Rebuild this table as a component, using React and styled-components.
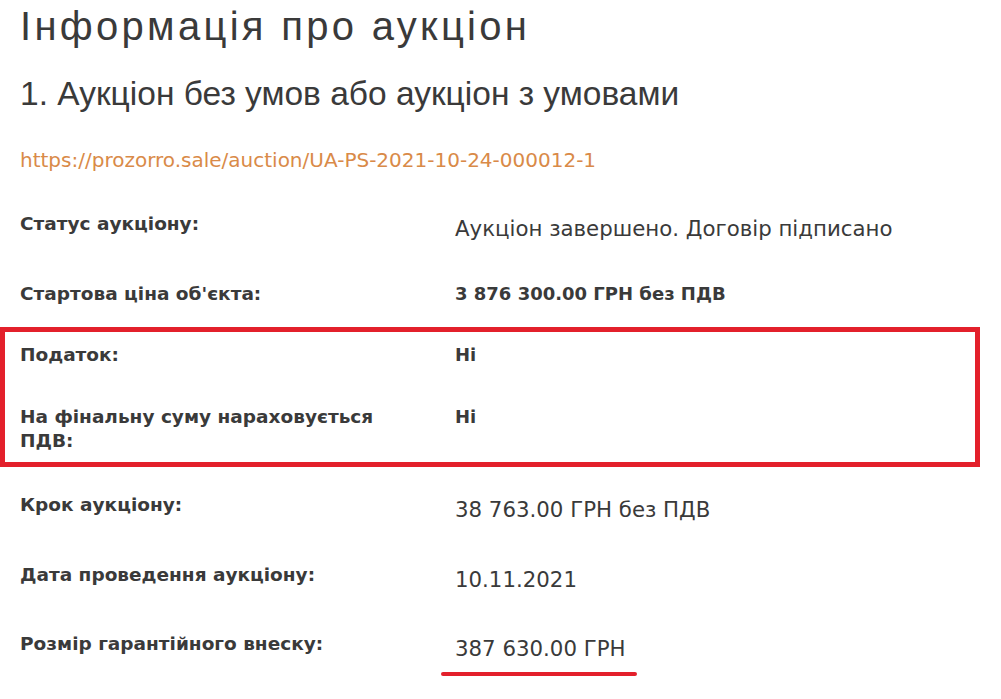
import React from 'react';
import styled, { createGlobalStyle } from 'styled-components';

const GlobalStyle = createGlobalStyle`
  body {
    margin: 0;
    background: #fff;
    font-family: "DejaVu Sans", "Open Sans", sans-serif;
    color: #3a3a3a;
  }
`;

const rows = [
  { label: 'Статус аукціону:', value: 'Аукціон завершено. Договір підписано', h: 70 },
  { label: 'Стартова ціна об\'єкта:', value: '3 876 300.00 ГРН без ПДВ', bold: true, h: 45 },
];

const boxed = [
  { label: 'Податок:', value: 'Ні', bold: true, h: 62 },
  { label: 'На фінальну суму нараховується ПДВ:', value: 'Ні', bold: true, h: 48 },
];

const tail = [
  { label: 'Крок аукціону:', value: '38 763.00 ГРН без ПДВ', h: 70 },
  { label: 'Дата проведення аукціону:', value: '10.11.2021', h: 69 },
  { label: 'Розмір гарантійного внеску:', value: '387 630.00 ГРН', marked: true, h: 60 },
];

function Info() {
  const renderRow = (r) => (
    <Row key={r.label} $h={r.h}>
      <Label>{r.label}</Label>
      <Value $bold={r.bold} $marked={r.marked}>{r.value}</Value>
    </Row>
  );

  return (
    <Page>
      <GlobalStyle />
      <Title>Інформація про аукціон</Title>
      <Subtitle>1. Аукціон без умов або аукціон з умовами</Subtitle>
      <Link href="#">https://prozorro.sale/auction/UA-PS-2021-10-24-000012-1</Link>
      <Table>
        {rows.map(renderRow)}
        <Highlight>{boxed.map(renderRow)}</Highlight>
        {tail.map(renderRow)}
      </Table>
    </Page>
  );
}

const Page = styled.div`
  width: 1001px;
  height: 699px;
  overflow: hidden;
`;

const Title = styled.h1`
  margin: 0;
  padding: 3px 0 0 20px;
  font-family: "Liberation Sans", Arial, sans-serif;
  font-weight: 400;
  font-size: 40px;
  letter-spacing: 3.3px;
  line-height: 46px;
  color: #3a3a3a;
`;

const Subtitle = styled.h2`
  margin: 26px 0 0;
  padding-left: 20px;
  font-family: "Liberation Sans", Arial, sans-serif;
  font-weight: 400;
  font-size: 33.5px;
  line-height: 38px;
  color: #3a3a3a;
`;

const Link = styled.a`
  display: block;
  margin: 34px 0 0 20px;
  font-size: 20px;
  line-height: 26px;
  color: #d98a48;
  text-decoration: none;
`;

const Table = styled.div`
  margin-top: 39px;
`;

const Row = styled.div`
  display: grid;
  grid-template-columns: 435px 1fr;
  align-items: start;
  padding-left: 20px;
  height: ${(p) => p.$h}px;
`;

const Highlight = styled.div`
  width: 980px;
  margin: 0 0 26px;
  box-sizing: border-box;
  border: 5px solid #e3202b;
  padding: 11px 0 9px;
  & > ${Row} {
    padding-left: 15px;
  }
`;

const Label = styled.div`
  font-weight: 700;
  font-size: 18.5px;
  line-height: 24px;
  max-width: 380px;
`;

const Value = styled.div`
  position: relative;
  justify-self: start;
  font-weight: ${(p) => (p.$bold ? 700 : 400)};
  font-size: ${(p) => (p.$bold ? '18px' : '21.3px')};
  line-height: 24px;
  padding-top: ${(p) => (p.$bold ? '0' : '5px')};
  ${(p) =>
    p.$marked &&
    `
    &::after {
      content: "";
      position: absolute;
      left: -14px;
      right: -11px;
      top: 40px;
      height: 4px;
      border-radius: 2px;
      background: #e3202b;
    }
  `}
`;

export default Info;
